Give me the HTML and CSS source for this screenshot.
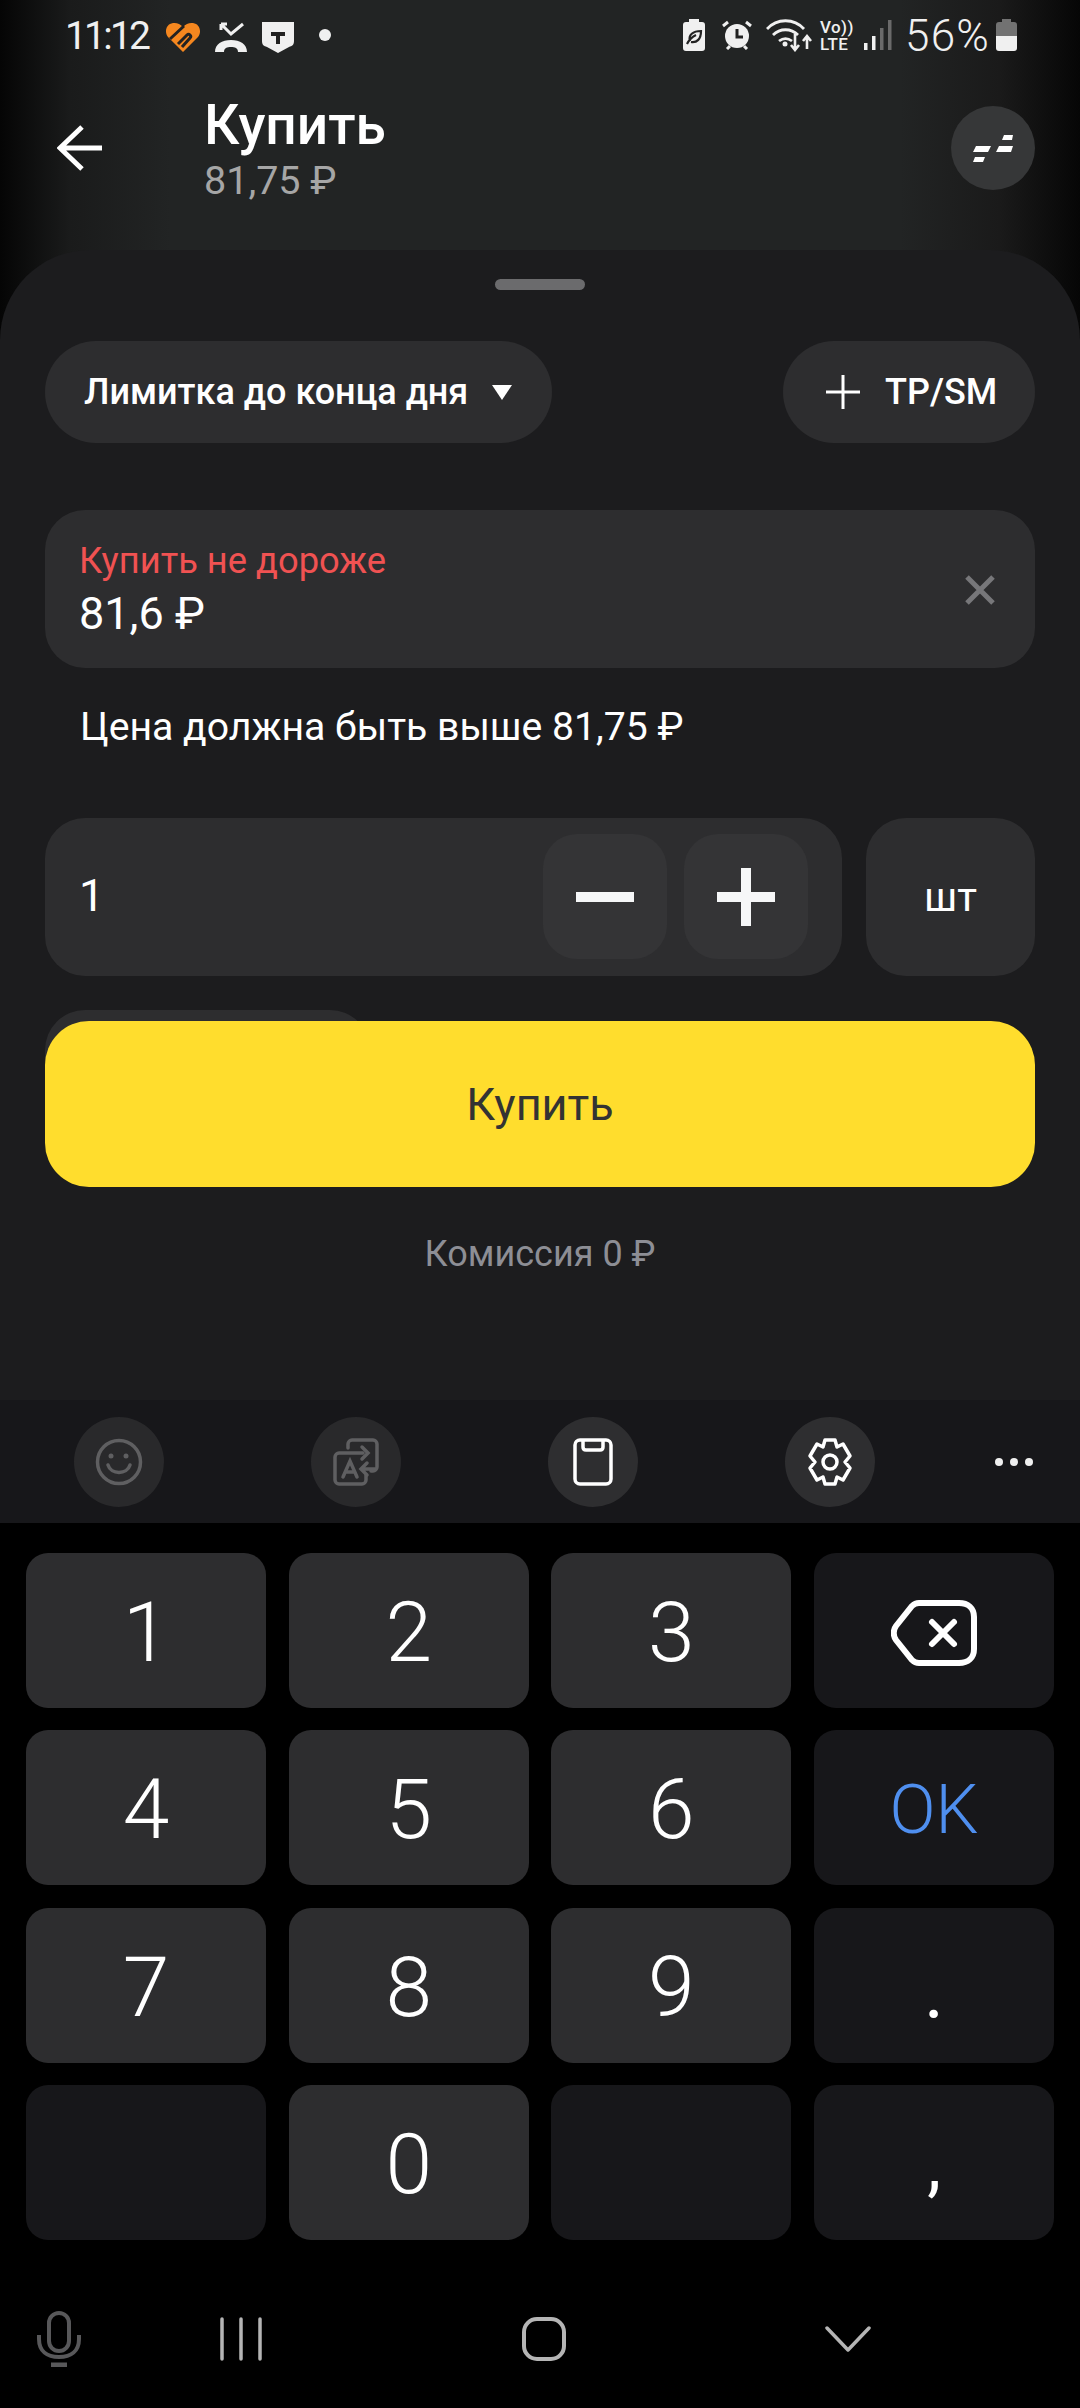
FILE: index.html
```html
<!DOCTYPE html>
<html lang="ru">
<head>
    <meta charset="UTF-8">
    <meta name="viewport" content="width=device-width, initial-scale=1.0">
    <title>Купить</title>
    <link rel="stylesheet" href="styles.css">
</head>
<body>
<div class="screen">
    <div class="app">
        <div class="status-bar">
            <span class="time">11:12</span>
            <svg class="st-heart" width="36" height="32" viewBox="0 0 36 32">
                <path d="M18 31 3 16C-1 11 1 3 8 2c4-.5 7 1 10 4 3-3 6-4.500 10-4 7 1 9 9 5 14z" fill="#f5871f"/>
                <path d="M5 18 19 5M13 23l9-9c2-2 5 1 3 3l-8 9" fill="none" stroke="#222" stroke-width="3"/>
            </svg>
            <svg class="st-call" width="34" height="32" viewBox="0 0 34 32">
                <path d="M1 31c0-8 7-12 16-12s16 4 16 12h-9c0-4-3-5-7-5s-7 1-7 5z" fill="#f0f0f0"/>
                <path d="M7 3l10 10L29 3M7 3h6M7 3v6" fill="none" stroke="#f0f0f0" stroke-width="3"/>
            </svg>
            <svg class="st-shield" width="32" height="32" viewBox="0 0 32 32">
                <path d="M0 1h32v19c0 4-2 5-5 6l-11 6-11-6c-3-1-5-2-5-6z" fill="#f0f0f0"/>
                <path d="M9 11h14v4h-5v8h-4v-8H9z" fill="#222"/>
            </svg>
            <span class="st-dot"></span>
            <span class="st-spacer"></span>
            <svg class="st-leaf" width="22" height="32" viewBox="0 0 22 32">
                <path d="M6 0h10v3h3c2 0 3 1 3 3v23c0 2-1 3-3 3H3c-2 0-3-1-3-3V6c0-2 1-3 3-3h3z" fill="#f0f0f0"/>
                <path d="M4 25c2-4 5-7 9-9M7 22c-2-6 3-10 11-10 0 8-4 12-10 11" fill="none" stroke="#222" stroke-width="2.200"/>
            </svg>
            <svg class="st-alarm" width="30" height="30" viewBox="0 0 30 30">
                <circle cx="15" cy="16" r="12" fill="#f0f0f0"/>
                <path d="M15 9v8h6" fill="none" stroke="#222" stroke-width="3"/>
                <path d="M1 6l5-4M29 6l-5-4M5 29l3-3M25 29l-3-3" stroke="#f0f0f0" stroke-width="3" fill="none"/>
            </svg>
            <svg class="st-wifi" width="46" height="34" viewBox="0 0 46 34">
                <path d="M1 11c10-11 27-11 37 0M7 17c7-7 18-7 25 0M13 23c4-3 9-3 13 0" fill="none" stroke="#f0f0f0" stroke-width="2.800"/>
                <circle cx="19" cy="26" r="2.500" fill="#f0f0f0"/>
                <path d="M29 16v15M25 27l4 5 4-5M41 31V19M37 23l4-5 4 5" fill="none" stroke="#f0f0f0" stroke-width="2.600"/>
            </svg>
            <div class="st-volte"><span>Vo))</span><span>LTE</span></div>
            <svg class="st-signal" width="28" height="30" viewBox="0 0 28 30">
                <rect x="0" y="23" width="3.500" height="7" fill="#f0f0f0"/>
                <rect x="8" y="16" width="3.500" height="14" fill="#f0f0f0"/>
                <rect x="16" y="8" width="3.500" height="22" fill="#6a6a6a"/>
                <rect x="24" y="0" width="3.500" height="30" fill="#6a6a6a"/>
            </svg>
            <span class="percent">56%</span>
            <svg class="st-battery" width="21" height="32" viewBox="0 0 21 32">
                <path d="M6 0h9v3h3c2 0 3 1 3 3v11H0V6c0-2 1-3 3-3h3z" fill="#727272"/>
                <path d="M0 17h21v12c0 2-1 3-3 3H3c-2 0-3-1-3-3z" fill="#f0f0f0"/>
            </svg>
        </div>

        <div class="header">
            <svg class="back" width="46" height="46" viewBox="0 0 46 46">
                <path d="M45 23H4M25 2 3 23l22 21" fill="none" stroke="#fff" stroke-width="5"/>
            </svg>
            <div class="header-titles">
                <div class="title">Купить</div>
                <div class="subtitle">81,75 ₽</div>
            </div>
            <div class="round-btn">
                <svg width="40" height="27" viewBox="0 0 40 27">
                    <path d="M3 11h15l-3 6H0zM2 22h10l-2 5H0zM26 11h14l-2 6H23zM31 0h9l-1 5H29z" fill="#fff"/>
                </svg>
            </div>
        </div>

        <div class="sheet">
            <div class="handle"></div>
            <div class="chips">
                <div class="chip chip-type">
                    <span>Лимитка до конца дня</span>
                    <span class="triangle"></span>
                </div>
                <div class="chip chip-tp">
                    <svg width="34" height="34" viewBox="0 0 34 34"><path d="M17 0v34M0 17h34" stroke="#fff" stroke-width="3"/></svg>
                    <span>TP/SM</span>
                </div>
            </div>

            <div class="field">
                <div>
                    <div class="field-label">Купить не дороже</div>
                    <div class="field-value">81,6 ₽</div>
                </div>
                <svg width="30" height="30" viewBox="0 0 30 30"><path d="M2 2l26 26M28 2 2 28" stroke="#77777a" stroke-width="5"/></svg>
            </div>
            <div class="hint">Цена должна быть выше 81,75 ₽</div>

            <div class="qty-row">
                <div class="qty">
                    <span class="qty-value">1</span>
                    <div class="qty-btn"><svg width="58" height="58" viewBox="0 0 58 58"><path d="M0 29h58" stroke="#f6f7f8" stroke-width="10"/></svg></div>
                    <div class="qty-btn"><svg width="58" height="58" viewBox="0 0 58 58"><path d="M0 29h58M29 0v58" stroke="#f6f7f8" stroke-width="10"/></svg></div>
                </div>
                <div class="unit">шт</div>
            </div>

            <div class="hidden-chip"></div>
            <div class="buy-btn">Купить</div>
            <div class="fee">Комиссия 0 ₽</div>
        </div>
    </div>

    <div class="kb-toolbar">
        <div class="tool tool-off">
            <svg width="48" height="48" viewBox="0 0 48 48" fill="none" stroke="#5f5f61" stroke-width="3.500">
                <circle cx="24" cy="24" r="21.500"/>
                <path d="M13 27c3 10 19 10 22 0" stroke-linecap="round"/>
                <circle cx="16" cy="18" r="2.500" fill="#5f5f61" stroke="none"/>
                <circle cx="31" cy="18" r="2.500" fill="#5f5f61" stroke="none"/>
            </svg>
        </div>
        <div class="tool tool-off">
            <svg width="46" height="48" viewBox="0 0 46 48" fill="none" stroke="#5f5f61" stroke-width="3.500" stroke-linecap="round">
                <path d="M30 15H6c-2 0-4 2-4 4v23c0 2 2 4 4 4h23c2 0 4-2 4-4v-5"/>
                <path d="M15 10V6c0-2 2-4 4-4h21c2 0 4 2 4 4v23c0 2-2 4-4 4h-2"/>
                <path d="M29 9l6 6-6 6M42 31H29M34 25l-6 6 6 6"/>
                <path d="M10 39l7-16 7 16M13 34h8"/>
            </svg>
        </div>
        <div class="tool">
            <svg width="40" height="48" viewBox="0 0 40 48" fill="none" stroke="#fff" stroke-width="3.500">
                <rect x="2" y="2" width="36" height="44" rx="5"/>
                <path d="M10 2v7c0 2 1 3 3 3h14c2 0 3-1 3-3V2"/>
            </svg>
        </div>
        <div class="tool">
            <svg width="46" height="48" viewBox="0 0 46 48" fill="none" stroke="#fff" stroke-width="3.500" stroke-linejoin="round">
                <circle cx="23" cy="24" r="7"/>
                <path d="M18 2h10l2 7 6-3 7 12-5 6 5 6-7 12-6-3-2 7H18l-2-7-6 3-7-12 5-6-5-6 7-12 6 3z"/>
            </svg>
        </div>
        <div class="dots"><i></i><i></i><i></i></div>
    </div>

    <div class="keyboard">
        <div class="key">1</div>
        <div class="key">2</div>
        <div class="key">3</div>
        <div class="key key-dark">
            <svg width="86" height="66" viewBox="0 0 86 66" fill="none" stroke="#fff" stroke-width="6" stroke-linecap="round">
                <path d="M28 3h40c9 0 15 5 15 14v32c0 9-6 14-15 14H28c-3 0-5-1-7-3L5 40c-3-4-3-10 0-14L21 6c2-2 4-3 7-3z"/>
                <path d="M41 22l22 22M63 22 41 44"/>
            </svg>
        </div>
        <div class="key">4</div>
        <div class="key">5</div>
        <div class="key">6</div>
        <div class="key key-dark key-ok">OK</div>
        <div class="key">7</div>
        <div class="key">8</div>
        <div class="key">9</div>
        <div class="key key-dark key-dot">.</div>
        <div class="key key-dark"></div>
        <div class="key">0</div>
        <div class="key key-dark"></div>
        <div class="key key-dark key-comma">,</div>
    </div>

    <div class="nav">
        <svg class="nav-mic" width="44" height="56" viewBox="0 0 44 56" fill="none" stroke="#58585a" stroke-width="4">
            <rect x="12" y="2" width="20" height="38" rx="10"/>
            <path d="M2 24v4c0 12 8 18 20 18s20-6 20-18v-4" stroke-width="4"/>
            <path d="M14 54h16" stroke-width="5"/>
        </svg>
        <svg class="nav-bars" width="42" height="44" viewBox="0 0 42 44" stroke="#b5b5b5" stroke-width="3.500" stroke-linecap="round">
            <path d="M2 2v40M21 2v40M40 2v40"/>
        </svg>
        <svg class="nav-home" width="44" height="44" viewBox="0 0 44 44" fill="none" stroke="#b5b5b5" stroke-width="4">
            <rect x="2" y="2" width="40" height="40" rx="13"/>
        </svg>
        <svg class="nav-back" width="46" height="26" viewBox="0 0 46 26" fill="none" stroke="#b5b5b5" stroke-width="3.500" stroke-linecap="round" stroke-linejoin="round">
            <path d="M2 2l21 22L44 2"/>
        </svg>
    </div>
</div>
</body>
</html>
```

FILE: styles.css
```css
* {
    box-sizing: border-box;
}
html, body {
    margin: 0;
    padding: 0;
    background-color: black;
}
body {
    font-family: Roboto, "Noto Sans", sans-serif;
    color: white;
}
svg {
    display: block;
    flex-shrink: 0;
}
.screen {
    width: 1080px;
    height: 2408px;
    display: flex;
    flex-direction: column;
    overflow: hidden;
}
.app {
    height: 1400px;
    display: flex;
    flex-direction: column;
    background: linear-gradient(to right, #050505 0, #1a1b1b 70px, #222424 170px, #222424 900px, #1a1a1a 1000px, #060606 1080px);
}

/* status bar */
.status-bar {
    height: 72px;
    padding: 18px 63px 0 65px;
    display: flex;
    align-items: flex-start;
    color: #f0f0f0;
}
.time {
    font-size: 39px;
    line-height: 36px;
    letter-spacing: -2.8px;
    width: 100px;
}
.st-heart { margin: 3px 0 0 0; }
.st-call { margin: 3px 0 0 13px; }
.st-shield { margin: 3px 0 0 14px; }
.st-dot {
    width: 12px;
    height: 12px;
    border-radius: 50%;
    background-color: #f0f0f0;
    margin: 11px 0 0 25px;
}
.st-spacer { flex: 1; }
.st-leaf { margin-top: 1px; }
.st-alarm { margin: 2px 0 0 17px; }
.st-wifi { margin: 0 0 0 14px; }
.st-volte {
    width: 32px;
    margin-left: 8px;
    font-size: 17px;
    font-weight: 500;
    line-height: 17px;
    letter-spacing: 0.4px;
    white-space: nowrap;
    display: flex;
    flex-direction: column;
    padding-top: 1px;
}
.st-signal { margin: 2px 0 0 12px; }
.percent {
    font-size: 44px;
    line-height: 36px;
    letter-spacing: 1.2px;
    margin-left: 13px;
    font-weight: 300;
}
.st-battery { margin: 1px 0 0 6px; }

/* header */
.header {
    height: 178px;
    padding: 0 45px 0 57px;
    display: flex;
    align-items: flex-start;
}
.back { margin-top: 53px; }
.header-titles {
    margin-left: 101px;
    flex: 1;
    padding-top: 25px;
}
.title {
    font-size: 55px;
    font-weight: 500;
    line-height: 56px;
}
.subtitle {
    font-size: 39.500px;
    line-height: 44px;
    color: #a6a6a6;
    margin-top: 6px;
}
.round-btn {
    width: 84px;
    height: 84px;
    margin-top: 34px;
    border-radius: 50%;
    background-color: #363738;
    display: flex;
    align-items: center;
    justify-content: center;
}

/* sheet */
.sheet {
    flex: 1;
    background-color: #1c1c1e;
    border-radius: 90px 90px 0 0;
    padding: 29px 45px 0;
}
.handle {
    width: 90px;
    height: 11px;
    margin: 0 auto;
    border-radius: 6px;
    background-color: #6b6b6d;
}
.chips {
    margin-top: 51px;
    display: flex;
    justify-content: space-between;
}
.chip {
    height: 102px;
    border-radius: 51px;
    background-color: #2d2d2f;
    display: flex;
    align-items: center;
    font-size: 36px;
    font-weight: 500;
}
.chip-type {
    width: 507px;
    padding-left: 39px;
}
.triangle {
    width: 0;
    height: 0;
    margin-left: 24px;
    border-left: 10px solid transparent;
    border-right: 10px solid transparent;
    border-top: 15px solid white;
}
.chip-tp {
    width: 252px;
    padding-left: 43px;
}
.chip-tp span { margin-left: 25px; }
.field {
    margin-top: 67px;
    height: 158px;
    border-radius: 40px;
    background-color: #2d2d2f;
    padding: 29px 40px 0 34px;
    display: flex;
    justify-content: space-between;
}
.field svg { margin-top: 36px; }
.field-label {
    font-size: 36.300px;
    line-height: 44px;
    color: #f05252;
}
.field-value {
    font-size: 45px;
    line-height: 50px;
    margin-top: 6px;
}
.hint {
    margin: 37px 0 0 35px;
    font-size: 39.200px;
    line-height: 44px;
}
.qty-row {
    margin-top: 69px;
    display: flex;
    justify-content: space-between;
}
.qty {
    width: 797px;
    height: 158px;
    border-radius: 40px;
    background-color: #2d2d2f;
    padding: 16px 34px 0 34px;
    display: flex;
    gap: 17px;
}
.qty-value {
    flex: 1;
    font-size: 45px;
    line-height: 124px;
}
.qty-btn {
    width: 124px;
    height: 125px;
    border-radius: 34px;
    background-color: #343436;
    display: flex;
    align-items: center;
    justify-content: center;
}
.unit {
    width: 169px;
    height: 158px;
    border-radius: 40px;
    background-color: #2d2d2f;
    display: flex;
    align-items: center;
    justify-content: center;
    font-size: 41px;
}
/* chip scrolled away under the buy button */
.hidden-chip {
    width: 325px;
    height: 102px;
    margin: 34px 0 -91px;
    border-radius: 40px;
    background-color: #2d2d2f;
}
.buy-btn {
    height: 166px;
    border-radius: 44px;
    background-color: #ffdd2d;
    color: #333;
    font-size: 45px;
    display: flex;
    align-items: center;
    justify-content: center;
}
.fee {
    margin-top: 45px;
    text-align: center;
    font-size: 36px;
    line-height: 44px;
    color: #8d8e95;
}

/* keyboard */
.kb-toolbar {
    height: 123px;
    background-color: #17171a;
    padding-left: 74px;
    display: flex;
    align-items: center;
    gap: 147px;
}
.tool {
    width: 90px;
    height: 90px;
    border-radius: 50%;
    background-color: #2e2e30;
    display: flex;
    align-items: center;
    justify-content: center;
}
.tool-off { background-color: #29292b; }
.dots {
    display: flex;
    gap: 7px;
    margin-left: -27px;
}
.dots i {
    width: 8px;
    height: 8px;
    border-radius: 50%;
    background-color: #f0f0f0;
}
.keyboard {
    padding: 30px 26px 0;
    display: grid;
    grid-template-columns: repeat(4, 240px);
    grid-auto-rows: 155px;
    column-gap: 22.700px;
    row-gap: 22.400px;
}
.key {
    border-radius: 22px;
    background-color: #2d2d2f;
    display: flex;
    align-items: center;
    justify-content: center;
    font-size: 84px;
    font-weight: 350;
    padding-top: 4px;
    color: white;
}
.key-dark { background-color: #17171a; }
.key-ok {
    font-size: 68px;
    color: #4f8fef;
}
.key-dot {
    font-size: 76px;
    font-weight: 400;
    padding-top: 12px;
}
.key-comma {
    font-size: 70px;
    font-weight: 400;
    padding-top: 5px;
}

/* nav bar */
.nav {
    flex: 1;
    display: flex;
    align-items: center;
    padding: 30px 0 0 37px;
}
.nav-bars { margin-left: 139px; }
.nav-home { margin-left: 260px; }
.nav-back { margin-left: 259px; }
```
